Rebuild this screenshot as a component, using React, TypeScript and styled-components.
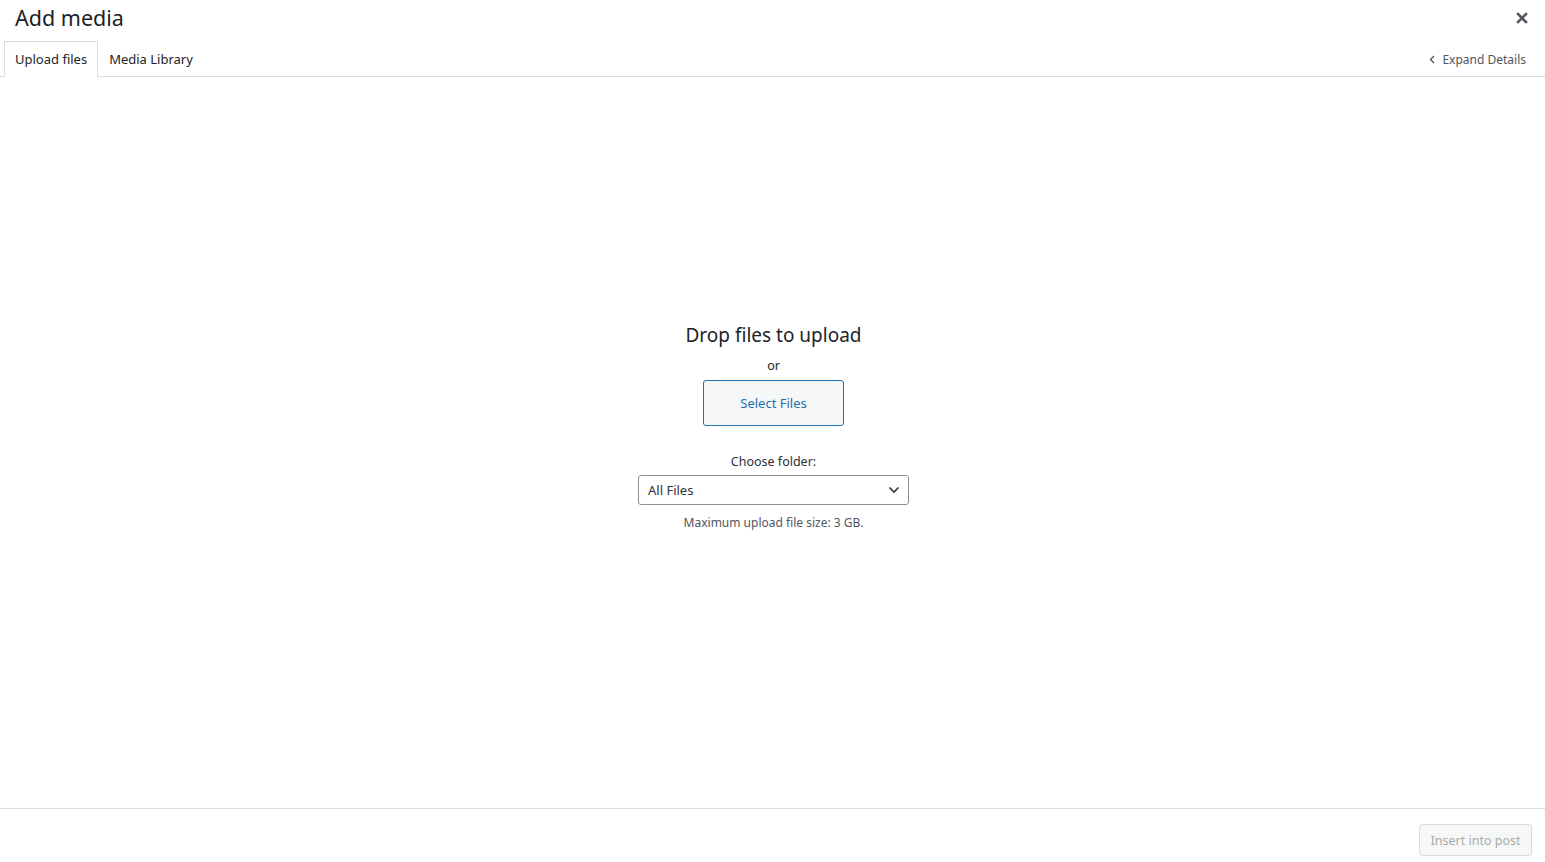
import React from "react";
import styled, { createGlobalStyle } from "styled-components";

const Global = createGlobalStyle`
  html, body { margin: 0; padding: 0; background: #fff; }
  body { font-family: "Noto Sans", "Open Sans", sans-serif; color: #1d2327; }
  #root { height: 862px; }
  * { box-sizing: border-box; }
`;

const Frame = styled.div`
  height: 862px;
  display: flex;
  flex-direction: column;
  position: relative;
`;

const TitleBar = styled.div`
  height: 38px;
  padding-left: 15px;
  padding-bottom: 2px;
  display: flex;
  align-items: center;
`;

const Title = styled.h1`
  margin: 0;
  font-size: 21.5px;
  font-weight: 400;
  line-height: 1;
  color: #1d2327;
`;

const Close = styled.button`
  position: absolute;
  top: 7px;
  right: 12px;
  width: 22px;
  height: 22px;
  border: 0;
  background: transparent;
  padding: 0;
  display: flex;
  align-items: center;
  justify-content: center;
  cursor: pointer;
`;

const TabRow = styled.div`
  margin-top: 3px;
  height: 36px;
  border-bottom: 1px solid #dcdcde;
  display: flex;
  align-items: stretch;
  padding-left: 4px;
  padding-right: 19px;
  flex-shrink: 0;
`;

const Tab = styled.div<{ $active?: boolean }>`
  padding: 0 10px;
  display: flex;
  align-items: center;
  font-size: 13px;
  color: #1d2327;
  background: ${(p) => (p.$active ? "#fff" : "transparent")};
  border: 1px solid ${(p) => (p.$active ? "#dcdcde" : "transparent")};
  border-bottom: 0;
  margin-bottom: -1px;
  height: 36px;
  padding-bottom: 1px;
`;

const Spacer = styled.div`flex: 1;`;

const Expand = styled.div`
  display: flex;
  align-items: center;
  gap: 7px;
  font-size: 12px;
  color: #50575e;
  padding-top: 2px;
`;

const Body = styled.div`
  flex: 1;
  display: flex;
  flex-direction: column;
  align-items: center;
  padding-top: 244px;
  padding-left: 2px;
`;

const Drop = styled.div`
  font-size: 19px;
  color: #1d2327;
  line-height: 28px;
`;

const Or = styled.div`
  font-size: 12.5px;
  margin-top: 8px;
  line-height: 18px;
`;

const SelectBtn = styled.button`
  margin-top: 5px;
  width: 141px;
  height: 46px;
  border: 1px solid #2271b1;
  border-radius: 3px;
  background: #f6f7f7;
  color: #2271b1;
  font-family: inherit;
  font-size: 13px;
`;

const Label = styled.div`
  margin-top: 27px;
  font-size: 12.5px;
  line-height: 18px;
  color: #2c3338;
`;

const Select = styled.div`
  margin-top: 4px;
  width: 271px;
  height: 30px;
  border: 1px solid #8c8f94;
  border-radius: 3px;
  display: flex;
  align-items: center;
  justify-content: space-between;
  padding: 0 8px 0 9px;
  font-size: 13px;
  color: #2c3338;
`;

const Max = styled.div`
  margin-top: 9px;
  font-size: 12px;
  color: #50575e;
`;

const Footer = styled.div`
  height: 54px;
  flex-shrink: 0;
  border-top: 1px solid #dcdcde;
  display: flex;
  justify-content: flex-end;
  align-items: flex-start;
  padding: 15px 13px 0 0;
`;

const Insert = styled.button`
  width: 113px;
  height: 32px;
  border: 1px solid #dcdcde;
  border-radius: 3px;
  background: #f6f7f7;
  color: #a7aaad;
  font-family: inherit;
  font-size: 12.5px;
`;

export default function App() {
  return (
    <>
      <Global />
      <Frame>
        <TitleBar>
          <Title>Add media</Title>
        </TitleBar>
        <Close aria-label="Close">
          <svg width="12" height="12" viewBox="0 0 12 12">
            <path d="M2 2 L10 10 M10 2 L2 10" stroke="#50575e" strokeWidth="2.6" strokeLinecap="square" />
          </svg>
        </Close>
        <TabRow>
          <Tab $active>Upload files</Tab>
          <Tab>Media Library</Tab>
          <Spacer />
          <Expand>
            <svg width="6" height="9" viewBox="0 0 6 9">
              <path d="M5 1 L1.5 4.5 L5 8" stroke="#50575e" strokeWidth="1.4" fill="none" />
            </svg>
            Expand Details
          </Expand>
        </TabRow>
        <Body>
          <Drop>Drop files to upload</Drop>
          <Or>or</Or>
          <SelectBtn>Select Files</SelectBtn>
          <Label>Choose folder:</Label>
          <Select>
            <span>All Files</span>
            <svg width="12" height="8" viewBox="0 0 12 8">
              <path d="M1.5 1.5 L6 6 L10.5 1.5" stroke="#2c3338" strokeWidth="1.6" fill="none" />
            </svg>
          </Select>
          <Max>Maximum upload file size: 3 GB.</Max>
        </Body>
        <Footer>
          <Insert>Insert into post</Insert>
        </Footer>
      </Frame>
    </>
  );
}
